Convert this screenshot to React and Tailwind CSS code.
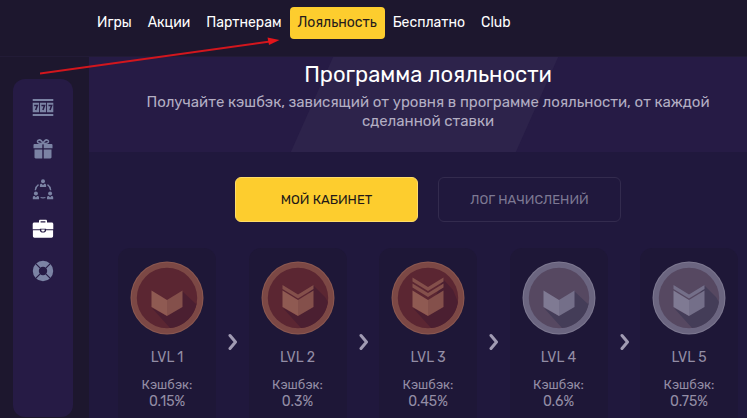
import { clsx } from "clsx";

const navItems = [
  { label: "Игры" },
  { label: "Акции" },
  { label: "Партнерам" },
  { label: "Лояльность", active: true },
  { label: "Бесплатно" },
  { label: "Club" },
];

const levels = [
  { name: "LVL 1", cashback: "0.15%", metal: "bronze", stripes: 0 },
  { name: "LVL 2", cashback: "0.3%", metal: "bronze", stripes: 1 },
  { name: "LVL 3", cashback: "0.45%", metal: "bronze", stripes: 2 },
  { name: "LVL 4", cashback: "0.6%", metal: "silver", stripes: 0 },
  { name: "LVL 5", cashback: "0.75%", metal: "silver", stripes: 1 },
];

const metals = {
  bronze: {
    edge: "#8b5850",
    ring: "#7c4845",
    inner: "#5b2632",
    shadow: "#4b1f31",
    left: "#8f5a52",
    right: "#84504b",
  },
  silver: {
    edge: "#7d7890",
    ring: "#6b6580",
    inner: "#564861",
    shadow: "#443d58",
    left: "#7f7a93",
    right: "#746f89",
  },
};

const SlotsIcon = () => (
  <svg viewBox="0 0 22 22" className="size-[22px]" fill="currentColor" aria-hidden="true">
    <path d="M.7 3h20.6v2H.7zM.7 18h20.6v2H.7zM.7 6.8h6.3v9.4H.7zM7.9 6.8h6.2v9.4H7.9zM15 6.8h6.3v9.4H15z" />
    <path
      d="M2.200 9.400h3.200L3.700 14M9.400 9.400h3.200L10.900 14M16.500 9.400h3.200L18 14"
      fill="none"
      stroke="#261b45"
      strokeWidth="1.500"
    />
  </svg>
);

const GiftIcon = () => (
  <svg viewBox="0 0 22 22" className="size-[22px]" fill="currentColor" aria-hidden="true">
    <path d="M2.400 7h7.900v4.300H1.500V7.900c0-.5.4-.9.9-.9zM11.700 7h7.900c.5 0 .9.4.9.9v3.400h-8.800zM2.500 12.400h7.800v9H3.700c-.7 0-1.200-.5-1.200-1.200zM11.700 12.400h7.800v7.800c0 .7-.5 1.200-1.200 1.200h-6.600z" />
    <path
      d="M11 6.300C9.800 3.800 8.400 2.700 7 2.900c-1.500.2-2 1.700-1.100 2.700C6.500 6.300 8 6.600 11 6.300c3 .3 4.500 0 5.100-.7.9-1 .4-2.500-1.100-2.700-1.400-.2-2.800.9-4 3.400z"
      fill="none"
      stroke="currentColor"
      strokeWidth="1.500"
    />
  </svg>
);

const PartnersIcon = () => (
  <svg viewBox="0 0 22 22" className="size-[22px]" fill="currentColor" aria-hidden="true">
    <circle cx="11" cy="3.200" r="2" />
    <path d="M7.900 9V7.100c0-.8.6-1.400 1.400-1.400h.4L11 7.200l1.300-1.500h.4c.8 0 1.400.6 1.400 1.400V9z" />
    <circle cx="3.900" cy="15.500" r="2" />
    <path d="M.8 21.300v-1.900c0-.8.6-1.400 1.400-1.400h.4l1.300 1.500L5.200 18h.4c.8 0 1.400.6 1.400 1.400v1.900z" />
    <circle cx="18.100" cy="15.500" r="2" />
    <path d="M15 21.300v-1.900c0-.8.6-1.400 1.400-1.400h.4l1.300 1.500 1.300-1.500h.4c.8 0 1.400.6 1.400 1.400v1.900z" />
    <path
      d="M3.300 12.200c.2-2.400 1.300-4.300 3.200-5.600M18.700 12.200c-.2-2.400-1.300-4.300-3.200-5.600M8.600 19.500c1.600.5 3.200.5 4.800 0"
      fill="none"
      stroke="currentColor"
      strokeWidth="1.300"
    />
  </svg>
);

const BriefcaseIcon = () => (
  <svg viewBox="0 0 22 22" className="size-[22px]" fill="currentColor" aria-hidden="true">
    <path
      fillRule="evenodd"
      d="M7 3.500V2c0-.8.6-1.300 1.300-1.300h5.400c.7 0 1.300.5 1.300 1.300v1.500h4.700c.9 0 1.600.7 1.600 1.600v5.200h-7.200v-.6H7.900v.6H.7V5.100c0-.9.7-1.600 1.600-1.600zm1.600 0h4.800V2.200H8.600z"
    />
    <path d="M.9 11.300h7c0 1.400 1.400 2.300 3.100 2.300s3.100-.9 3.100-2.300h7v5.800c0 .9-.7 1.600-1.600 1.600h-17c-.9 0-1.600-.7-1.600-1.600z" />
    <path d="M9.300 10.500h3.400v.8c0 .8-.7 1.200-1.700 1.200s-1.700-.4-1.700-1.200z" />
  </svg>
);

const SupportIcon = () => (
  <svg viewBox="0 0 22 22" className="size-[22px]" fill="none" aria-hidden="true">
    <circle cx="11" cy="11" r="7.200" stroke="currentColor" strokeWidth="6" />
    <path
      d="M3.200 3.200l5 5M18.800 3.200l-5 5M3.200 18.800l5-5M18.800 18.800l-5-5"
      stroke="#261b45"
      strokeWidth="1.200"
    />
  </svg>
);

const sidebarItems = [
  { label: "Слоты", Icon: SlotsIcon },
  { label: "Подарки", Icon: GiftIcon },
  { label: "Партнеры", Icon: PartnersIcon },
  { label: "Кабинет", Icon: BriefcaseIcon, active: true },
  { label: "Поддержка", Icon: SupportIcon },
];

// Stripes stack upwards above the book-shaped base
const stripeTops = [
  [],
  [24],
  [22.5, 16.5],
];

const Medal = ({ metal, stripes }) => {
  const c = metals[metal];
  const shadowTop = 30 - stripes * 6;
  return (
    <svg viewBox="0 0 74 74" className="size-[74px]" aria-hidden="true">
      <circle cx="37" cy="37" r="36.500" fill={c.edge} />
      <circle cx="37" cy="37" r="35.500" fill={c.ring} />
      <circle cx="37" cy="37" r="30.200" fill={c.inner} />
      <path
        d={`M52 ${shadowTop}L${66 - stripes * 2} ${43 - stripes * 7}L66.900 41A30.200 30.200 0 0 1 40 67L22 47L37 55z`}
        fill={c.shadow}
      />
      <path d="M21.500 29.500L37 39v16L21.500 46z" fill={c.left} />
      <path d="M52.500 29.500L37 39v16L52.500 46z" fill={c.right} />
      {stripeTops[stripes].map((y) => (
        <path
          key={y}
          d={`M21.500 ${y}L37 ${y + 9.5}L52.500 ${y}v4L37 ${y + 13.5}L21.500 ${y + 4}z`}
          fill={c.right}
        />
      ))}
    </svg>
  );
};

const Header = () => (
  <header className="h-[57px] border-b border-[#221b36] pl-[89px] pt-[7px]">
    <nav className="flex">
      {navItems.map(({ label, active }) => (
        <a
          key={label}
          href="#"
          className={clsx(
            "rounded px-2 text-[14px] leading-8",
            active ? "bg-[#fdcd2e] text-[#251b1c]" : "text-white"
          )}
        >
          {label}
        </a>
      ))}
    </nav>
  </header>
);

const Sidebar = () => (
  <aside className="mb-px ml-[13px] mt-[22px] flex w-[60px] flex-col items-center gap-[19px] rounded-xl bg-[#261b45] pt-[17px]">
    {sidebarItems.map(({ label, Icon, active }) => (
      <a key={label} href="#" aria-label={label} className={active ? "text-white" : "text-[#7b83a4]"}>
        <Icon />
      </a>
    ))}
  </aside>
);

const Hero = () => (
  <section className="relative h-[95px] overflow-hidden bg-[#261b45] pl-5 pt-1 text-center">
    <div className="absolute inset-y-0 left-[223px] w-[225px] -skew-x-24 bg-[#2d234b]" />
    <h1 className="relative text-[22px] leading-7 text-white">Программа лояльности</h1>
    <p className="relative mx-auto mt-1 max-w-[600px] text-[15px] leading-[19px] text-[#b3aec3]">
      Получайте кэшбэк, зависящий от уровня в программе лояльности, от каждой сделанной ставки
    </p>
  </section>
);

const Levels = () => (
  <ol className="mt-[26px] flex justify-between pl-[29px] pr-[9px]">
    {levels.map(({ name, cashback, metal, stripes }, idx) => (
      <li
        key={name}
        className="relative flex w-[98px] flex-col items-center rounded-xl bg-[#1e1737] pb-6 pt-[13px] text-[#938da5]"
      >
        <Medal metal={metal} stripes={stripes} />
        <h2 className="mt-[13px] text-[14px] leading-5">{name}</h2>
        <p className="mt-2 text-center text-[13px] leading-[17px]">Кэшбэк:</p>
        <p className="text-center text-[14px] leading-[17px]">{cashback}</p>
        {idx < levels.length - 1 && (
          <svg
            viewBox="0 0 10 18"
            className="absolute -right-[22px] top-[85px] h-[18px] w-[10px]"
            fill="none"
            stroke="#a19bb3"
            strokeWidth="3"
            strokeLinecap="round"
            strokeLinejoin="round"
            aria-hidden="true"
          >
            <path d="M2 2.500L7.500 9L2 15.500" />
          </svg>
        )}
      </li>
    ))}
  </ol>
);

const PointerArrow = () => (
  <svg
    viewBox="0 0 240 40"
    className="pointer-events-none absolute left-10 top-9 h-10 w-60"
    aria-hidden="true"
  >
    <path d="M0 37.500L230 5.500" stroke="#d2161d" strokeWidth="2" />
    <path d="M227.500 1.500L239.500 4L229 9z" fill="#e3151b" />
  </svg>
);

export default function App() {
  return (
    <div className="relative flex h-screen flex-col overflow-hidden bg-[#1d172e] font-['Rubik','Roboto',sans-serif]">
      <Header />
      <div className="flex min-h-0 flex-1">
        <Sidebar />
        <main className="ml-4 min-w-0 flex-1 bg-[#20183d]">
          <Hero />
          <div className="mt-[25px] flex justify-center gap-5 pl-5 text-[13px]">
            <button
              type="button"
              className="h-[45px] w-[183px] rounded-md border border-[#ffdc68] bg-[#fdcd2e] text-[#211818]"
            >
              МОЙ КАБИНЕТ
            </button>
            <button
              type="button"
              className="h-[45px] w-[183px] rounded-md border border-[#332b4e] text-[#7d7893]"
            >
              ЛОГ НАЧИСЛЕНИЙ
            </button>
          </div>
          <Levels />
        </main>
      </div>
      <PointerArrow />
    </div>
  );
}
